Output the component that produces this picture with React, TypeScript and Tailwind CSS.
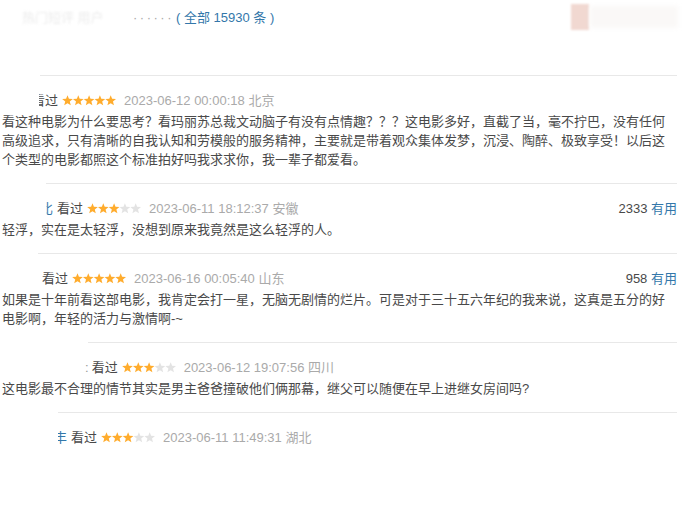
import React from "react";

interface Comment {
  id: number;
  lineLeft: number;
  headLeft: number;
  prefix?: React.ReactNode;
  coverFirst?: boolean;
  stars: number;
  time: string;
  place: string;
  votes?: string;
  text: string;
}

// the reference has user names painted over; keep the glyphs, cover the hidden part
function Covered({ children, cover }: { children: React.ReactNode; cover: string }) {
  return (
    <span className="relative inline-block">
      {children}
      <span className={`absolute left-0 top-0 h-full bg-white ${cover}`} />
    </span>
  );
}

const comments: Comment[] = [
  {
    id: 1,
    lineLeft: 40,
    headLeft: 30,
    coverFirst: true,
    stars: 5,
    time: "2023-06-12 00:00:18",
    place: "北京",
    text: "看这种电影为什么要思考？看玛丽苏总裁文动脑子有没有点情趣？？？这电影多好，直截了当，毫不拧巴，没有任何高级追求，只有清晰的自我认知和劳模般的服务精神，主要就是带着观众集体发梦，沉浸、陶醉、极致享受！以后这个类型的电影都照这个标准拍好吗我求求你，我一辈子都爱看。",
  },
  {
    id: 2,
    lineLeft: 46,
    headLeft: 38,
    prefix: (
      <span className="mr-[4px] text-[#37a]">
        <Covered cover="w-[6px]">比</Covered>
      </span>
    ),
    stars: 3,
    time: "2023-06-11 18:12:37",
    place: "安徽",
    votes: "2333",
    text: "轻浮，实在是太轻浮，没想到原来我竟然是这么轻浮的人。",
  },
  {
    id: 3,
    lineLeft: 38,
    headLeft: 40,
    stars: 5,
    time: "2023-06-16 00:05:40",
    place: "山东",
    votes: "958",
    text: "如果是十年前看这部电影，我肯定会打一星，无脑无剧情的烂片。可是对于三十五六年纪的我来说，这真是五分的好电影啊，年轻的活力与激情啊-~",
  },
  {
    id: 4,
    lineLeft: 88,
    headLeft: 83,
    prefix: <span className="mr-[3px] text-[#999]">:</span>,
    stars: 3,
    time: "2023-06-12 19:07:56",
    place: "四川",
    text: "这电影最不合理的情节其实是男主爸爸撞破他们俩那幕，继父可以随便在早上进继女房间吗?",
  },
  {
    id: 5,
    lineLeft: 58,
    headLeft: 52,
    prefix: (
      <span className="mr-[4px] text-[#37a]">
        <Covered cover="w-[4px]">丰</Covered>
      </span>
    ),
    stars: 3,
    time: "2023-06-11 11:49:31",
    place: "湖北",
    text: "",
  },
];

function Stars({ count }: { count: number }) {
  return (
    <svg width="54" height="11" viewBox="0 0 54 11" className="shrink-0">
      {[0, 1, 2, 3, 4].map(i => (
        <polygon
          key={i}
          transform={`translate(${i * 10.8} 0)`}
          points="5.5,0.2 6.91,3.86 10.83,4.07 7.78,6.54 8.79,10.33 5.5,8.2 2.21,10.33 3.22,6.54 0.17,4.07 4.09,3.86"
          fill={i < count ? "#ffac2d" : "#e3e3e3"}
        />
      ))}
    </svg>
  );
}

export default function App() {
  return (
    <div
      className="relative h-[505px] w-[695px] overflow-hidden bg-white text-[13px] leading-[19px] text-[#494949]"
      style={{ fontFamily: '"Liberation Sans", Arial, "Noto Sans CJK SC", sans-serif' }}
    >
      {/* heading */}
      <div className="flex h-[75px] items-start pt-[8px]">
        <span className="ml-[22px] w-[106px] overflow-hidden whitespace-nowrap text-[#ececec] blur-[1px]">热门短评 用户</span>
        <span className="ml-[5px] tracking-[2.5px] text-[#aaa]">······</span>
        <span className="ml-[2px] text-[#37a]">( 全部 15930 条 )</span>
        <div className="absolute left-[571px] top-[4px] h-[26px] w-[18px] bg-[#f1d8d1] blur-[1px]" />
        <div className="absolute left-[590px] top-[6px] h-[22px] w-[88px] bg-[#faf8f7] blur-[2px]" />
      </div>

      <div className="w-[677px]">
        {comments.map(c => (
          <div key={c.id}>
            <div className="h-px bg-[#e8e8e8]" style={{ marginLeft: c.lineLeft }} />
            <div className="pb-[14px] pl-[2px] pt-[15px]">
              <div className="flex h-[19px] items-center" style={{ paddingLeft: c.headLeft }}>
                {c.prefix}
                <span className="whitespace-nowrap">
                  {c.coverFirst ? <Covered cover="w-[7px]">看</Covered> : "看"}过
                </span>
                <span className="ml-[4px] flex items-center">
                  <Stars count={c.stars} />
                </span>
                <span className="ml-[8px] whitespace-nowrap text-[#aaa]">
                  {c.time} {c.place}
                </span>
                {c.votes && (
                  <span className="ml-auto whitespace-nowrap">
                    {c.votes} <span className="text-[#37a]">有用</span>
                  </span>
                )}
              </div>
              {c.text && <p className="mt-[2px] pr-[4px]">{c.text}</p>}
            </div>
          </div>
        ))}
      </div>
    </div>
  );
}
